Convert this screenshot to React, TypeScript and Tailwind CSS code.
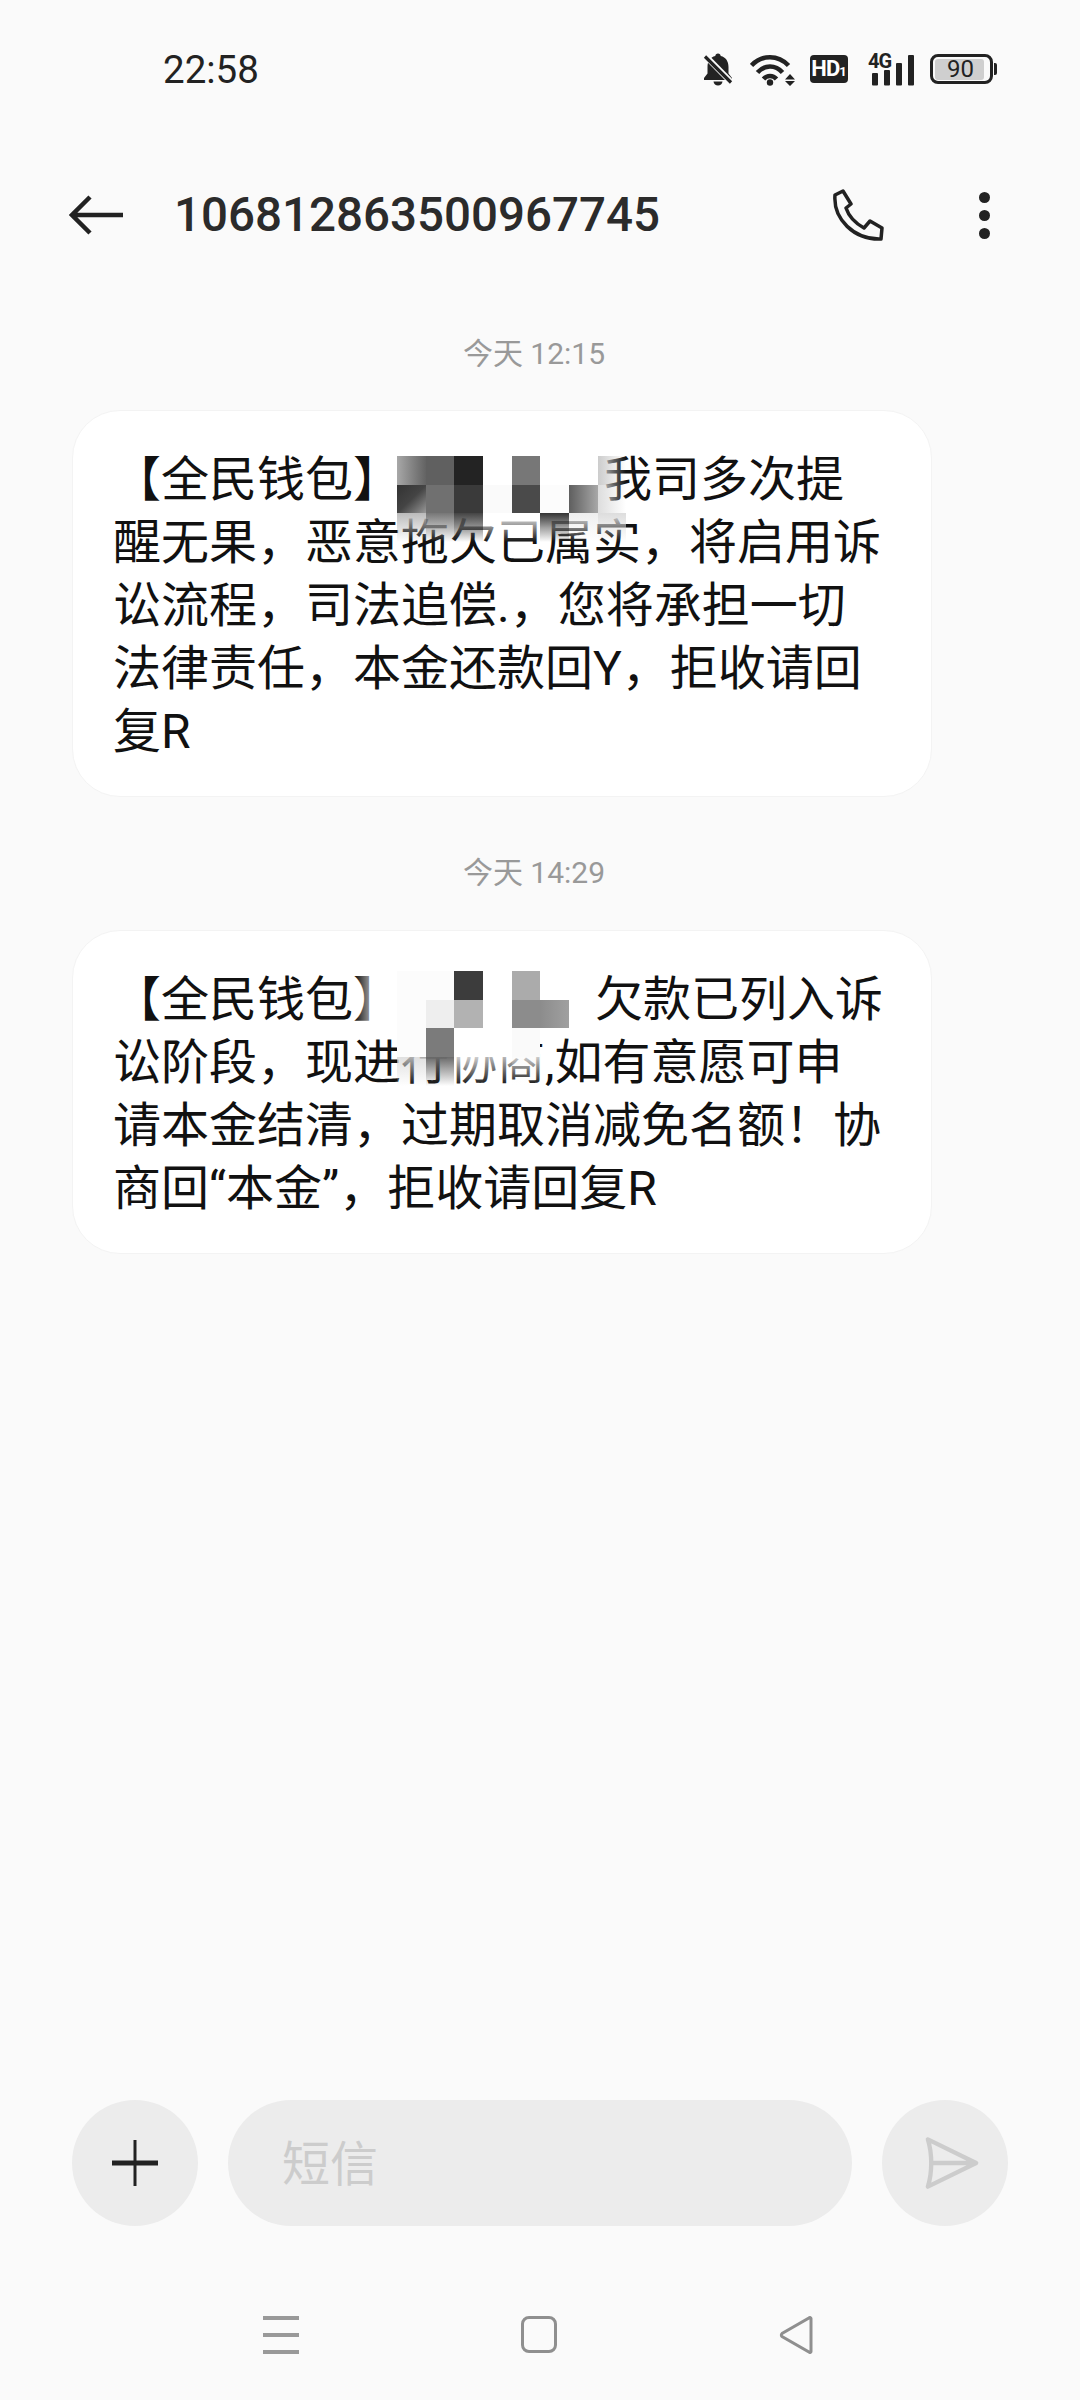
const fontStack = "font-['Roboto','Noto_Sans_CJK_SC',sans-serif]";

// mosaic cells, 8 columns by rows, 28.67px square
const mosaicOne = [
  ["bg-linear-to-r from-[#a8a8a8] to-[#636363]", "bg-[#606060]", "bg-[#232323]", "bg-white", "bg-[#777777]", "bg-white", "bg-white", "bg-linear-to-r from-[#cccccc] to-transparent"],
  ["bg-linear-to-br from-[#333333] via-[#444444] to-[#999999]", "bg-[#707070]", "bg-[#3a3a3a]", "bg-[#fafafa]", "bg-[#4a4a4a]", "bg-[#fcfcfc]", "bg-linear-to-r from-[#5f5f5f] to-[#a8a8a8]", "bg-linear-to-r from-[#dddddd] to-transparent"],
  ["bg-linear-to-b from-[#bbbbbb] to-transparent", "bg-linear-to-b from-[#777777] via-[#999999]/70 to-transparent", "bg-linear-to-b from-[#444444] via-[#666666]/70 to-transparent", "bg-linear-to-b from-white to-transparent", "bg-linear-to-b from-white to-transparent", "bg-linear-to-b from-[#333333] via-[#777777]/70 to-transparent", "bg-linear-to-b from-[#eeeeee] to-transparent", "bg-linear-to-b from-[#dddddd] to-transparent"],
];

const mosaicTwo = [
  ["bg-[#fcfcfc]", "bg-[#fcfcfc]", "bg-[#3c3c3c]", "bg-white", "bg-[#ababab]", "bg-white", "bg-transparent", "bg-transparent"],
  ["bg-[#fcfcfc]", "bg-[#eeeeee]", "bg-[#b2b2b2]", "bg-white", "bg-[#8c8c8c]", "bg-linear-to-r from-[#8c8c8c] to-[#a0a0a0]", "bg-transparent", "bg-transparent"],
  ["bg-[#fcfcfc]", "bg-[#7b7b7b]", "bg-white", "bg-white", "bg-[#fafafa]", "bg-transparent", "bg-transparent", "bg-transparent"],
  ["bg-linear-to-b from-[#d8d8d8]/80 to-transparent", "bg-linear-to-b from-[#6a6a6a] to-transparent", "bg-linear-to-b from-white/80 to-transparent", "bg-linear-to-b from-white/70 to-transparent", "bg-linear-to-b from-[#fafafa]/80 to-transparent", "bg-transparent", "bg-transparent", "bg-transparent"],
];

function Mosaic({ rows, top }: { rows: string[][]; top: string }) {
  return (
    <div className={`absolute left-[324px] grid grid-cols-[repeat(8,28.67px)] auto-rows-[28.67px] ${top}`}>
      {rows.flat().map((cell, i) => (
        <div key={i} className={cell} />
      ))}
    </div>
  );
}

function StatusIcons() {
  return (
    <div className="flex items-center">
      <svg width="30" height="33" viewBox="0 0 30 33" className="mr-[17px]">
        <path d="M15 0.5c1.6 0 2.6 1 2.7 2.6 5.2 1.2 7.8 5.4 7.8 11v6.4l3.5 4.6v1.9H1v-1.9l3.5-4.6v-6.4c0-5.6 2.6-9.8 7.8-11C12.4 1.5 13.4.5 15 .5z" fill="#222" />
        <path d="M10.5 28.5h9c-.3 2.4-2.2 4-4.5 4s-4.200-1.600-4.500-4z" fill="#222" />
        <path d="M1 1.500 29 30" stroke="#fafafa" strokeWidth="6" />
        <path d="M2 3.500 28 29.500" stroke="#222" strokeWidth="3.200" />
      </svg>
      <svg width="46" height="33" viewBox="0 0 46 33" className="mr-[14px]">
        <g fill="none" stroke="#222" strokeWidth="4.600">
          <path d="M1.500 12.500C12 1.500 28 1.500 38.500 12.500" />
          <path d="M7.500 19.500C14.500 11.500 25.500 11.500 32.500 19.500" />
          <path d="M13.500 26C17 22 23 22 26.500 26" />
        </g>
        <circle cx="20" cy="29.500" r="3.200" fill="#222" />
        <path d="M40 21l5 5.500H35zM35 28h10l-5 5z" fill="#222" />
      </svg>
      <div className="mr-[20px] flex h-[28px] w-[38px] items-baseline justify-center rounded-[4px] bg-[#222] pt-[1px] font-['Roboto',sans-serif] text-white">
        <span className="text-[22px] leading-[26px] font-bold tracking-[-1px]">HD</span>
        <span className="text-[13px] leading-[13px] font-bold">1</span>
      </div>
      <div className="relative mr-[16px] h-[33px] w-[46px]">
        <span className="absolute top-[-3px] left-0 font-['Roboto',sans-serif] text-[20px] leading-[22px] font-bold tracking-[-1px] text-[#222]">4G</span>
        <svg width="46" height="33" viewBox="0 0 46 33" className="absolute top-0 left-0">
          <g fill="#222">
            <rect x="4" y="20" width="6" height="12.500" rx="1" />
            <rect x="16" y="17" width="6" height="15.500" rx="1" />
            <rect x="28" y="10" width="6" height="22.500" rx="1" />
            <rect x="40" y="2" width="6" height="30.500" rx="1" />
          </g>
        </svg>
      </div>
      <div className="flex items-center">
        <div className="flex h-[30px] w-[63px] items-center rounded-[8px] border-[3px] border-[#222] p-[1.5px]">
          <div className="flex h-full w-[49px] items-center justify-center rounded-[3px] bg-[#cfcfcf] pl-[3px] font-['Roboto',sans-serif] text-[24px] leading-none text-[#222]">90</div>
        </div>
        <div className="ml-[1px] h-[12px] w-[3px] rounded-r-[2px] bg-[#222]" />
      </div>
    </div>
  );
}

function Header() {
  return (
    <div className="flex h-[154px] items-center pr-[90px] pl-[69px]">
      <svg width="54" height="40" viewBox="0 0 54 40" className="shrink-0">
        <path d="M21 2 3 20l18 18M3 20h51" fill="none" stroke="#222" strokeWidth="4.500" />
      </svg>
      <h1 className="ml-[51px] flex-1 pt-[2px] font-['Roboto',sans-serif] text-[47.5px] leading-none font-medium text-[#2b2b2b]">106812863500967745</h1>
      <svg width="52" height="52" viewBox="0 0 52 52" className="shrink-0">
        <path d="M3 6 11 2l8 13-5 4c3 9 9 15 18 20l6-7 12 7-1 11C22 51 1 30 3 6z" fill="none" stroke="#222" strokeWidth="3.500" strokeLinejoin="round" />
      </svg>
      <div className="ml-[95px] flex shrink-0 flex-col gap-[7px]">
        <span className="size-[11px] rounded-full bg-[#222]" />
        <span className="size-[11px] rounded-full bg-[#222]" />
        <span className="size-[11px] rounded-full bg-[#222]" />
      </div>
    </div>
  );
}

function TimeLabel({ text, className }: { text: string; className: string }) {
  return <div className={`h-[40px] pr-[12px] text-center text-[30px] leading-[40px] text-[#999999] ${className}`}>{text}</div>;
}

function Bubble({ children }: { children: React.ReactNode }) {
  return (
    <div className={`relative ml-[72px] w-[860px] rounded-[48px] border border-[#f3f3f3] bg-white pt-[37px] pb-[33px] pl-[40px] text-[48px] leading-[63px] whitespace-nowrap text-[#111111]`}>
      {children}
    </div>
  );
}

function Composer() {
  return (
    <div className="flex items-center gap-[30px] pl-[72px]">
      <button className="relative flex size-[126px] shrink-0 items-center justify-center rounded-full bg-[#ececec]">
        <svg width="46" height="46" viewBox="0 0 46 46">
          <path d="M23 0v46" stroke="#222" strokeWidth="3" />
          <path d="M0 23h46" stroke="#222" strokeWidth="5" />
        </svg>
      </button>
      <div className="flex h-[126px] w-[624px] items-center rounded-full bg-[#ececec] pt-[4px] pl-[54px] text-[48px] text-[#cccccc]">短信</div>
      <button className="flex size-[126px] shrink-0 items-center justify-center rounded-full bg-[#ececec] pl-[14px]">
        <svg width="56" height="56" viewBox="0 0 58 56">
          <path d="M4 3.500 54 28 4 52.500c2.500-8 3.500-16 3.500-24.500S6.500 11.500 4 3.500zM7.500 28H54" fill="none" stroke="#cccccc" strokeWidth="4.500" strokeLinejoin="round" />
        </svg>
      </button>
    </div>
  );
}

function NavBar() {
  return (
    <div className="mt-[90px] flex h-[84px] items-start pl-[263px]">
      <div className="mt-[0px] flex h-[38px] w-[36px] flex-col justify-between">
        <span className="h-[4px] bg-[#999999]" />
        <span className="h-[4px] bg-[#999999]" />
        <span className="h-[4px] bg-[#999999]" />
      </div>
      <div className="ml-[222px] h-[37px] w-[36px] rounded-[8px] border-[3px] border-[#8f8f8f]" />
      <svg width="36" height="38" viewBox="0 0 36 38" className="ml-[222px]">
        <path d="M32 2.500v33a1 1 0 0 1-1.700.7L3 20.500a2 2 0 0 1 0-3L30.300 1.800a1 1 0 0 1 1.700.7z" fill="none" stroke="#8f8f8f" strokeWidth="3" />
      </svg>
    </div>
  );
}

export default function App() {
  return (
    <div className={`flex h-[2400px] w-[1080px] flex-col overflow-hidden bg-[#fafafa] ${fontStack}`}>
      <div className="flex h-[138px] items-center justify-between pr-[83px] pl-[163px]">
        <span className="pt-[1px] font-['Roboto',sans-serif] text-[38.5px] text-[#222]">22:58</span>
        <StatusIcons />
      </div>
      <Header />
      <div className="min-h-0 flex-1">
        <TimeLabel text="今天 12:15" className="mt-[42px] mb-[36px]" />
        <Bubble>
          <div>
            【全民钱包】<span className="inline-block w-[203px]" />我司多次提
          </div>
          <div>醒无果，恶意拖欠已属实，将启用诉</div>
          <div>讼流程，司法追偿.，您将承担一切</div>
          <div>法律责任，本金还款回Y，拒收请回</div>
          <div>复R</div>
          <Mosaic rows={mosaicOne} top="top-[45px]" />
        </Bubble>
        <TimeLabel text="今天 14:29" className="mt-[56px] mb-[37px]" />
        <Bubble>
          <div>
            【全民钱包】<span className="inline-block w-[194px]" />欠款已列入诉
          </div>
          <div>讼阶段，现进行协商,如有意愿可申</div>
          <div>请本金结清，过期取消减免名额！协</div>
          <div>商回“本金”，拒收请回复R</div>
          <div className="absolute top-[40px] left-[282px] h-[60px] w-[42px] bg-linear-to-r from-transparent via-white/80 to-white" />
          <Mosaic rows={mosaicTwo} top="top-[40px]" />
        </Bubble>
      </div>
      <Composer />
      <NavBar />
    </div>
  );
}
